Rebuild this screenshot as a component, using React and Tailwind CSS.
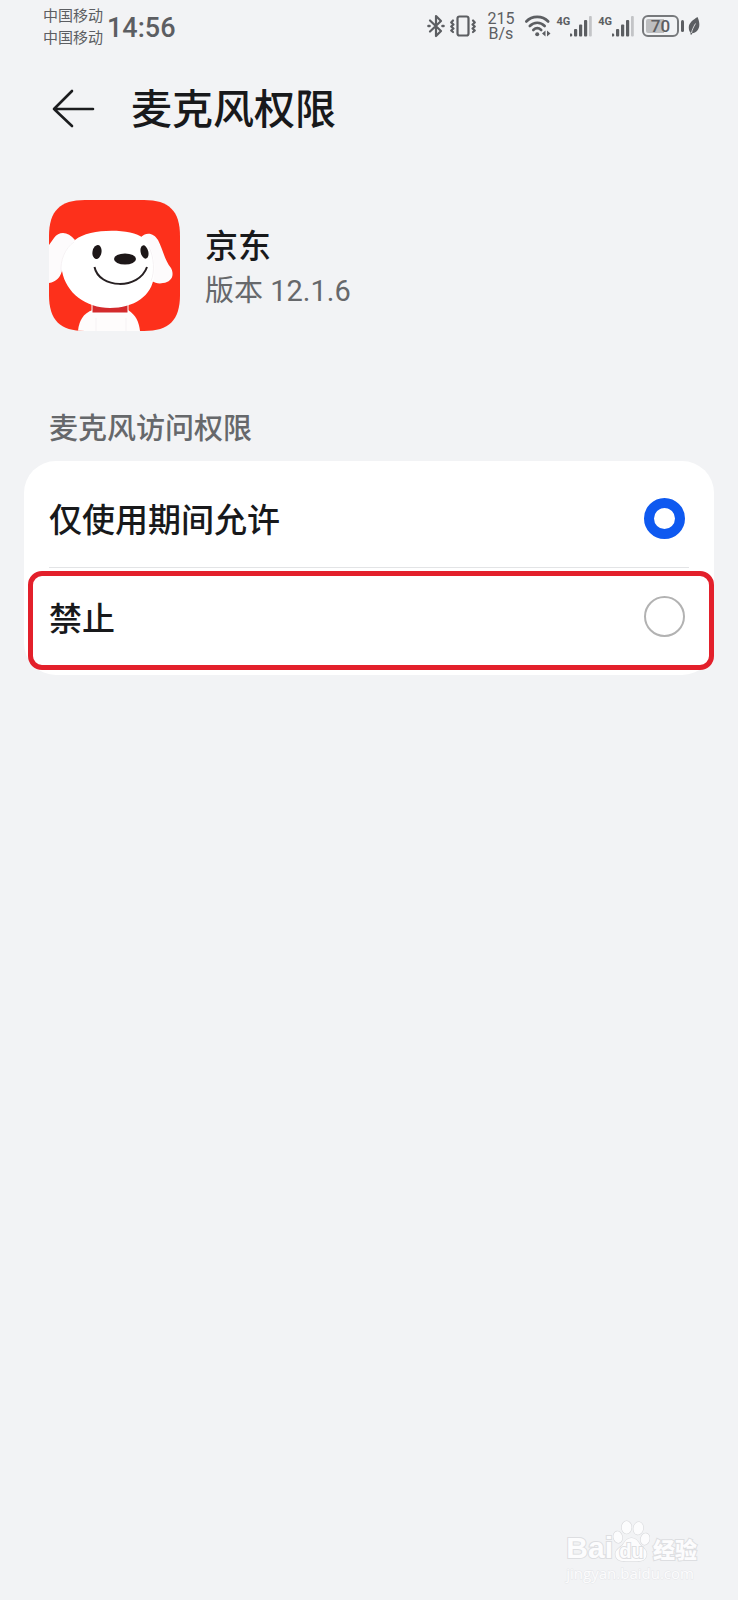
import { useState } from "react";

const options = [
  { value: "in-use", label: "仅使用期间允许" },
  { value: "deny", label: "禁止" },
];

function BluetoothIcon() {
  return (
    <svg className="h-6 w-[18px]" viewBox="0 0 18 24" fill="none" stroke="#5c5e62" strokeWidth="2.200" strokeLinejoin="round" strokeLinecap="round" aria-hidden="true">
      <path d="M3 6.500L14 17l-5 5V2l5 5L3 17.500" />
      <path d="M1.500 12h1M15.500 12h1" strokeWidth="2.600" />
    </svg>
  );
}

function VibrateIcon() {
  return (
    <svg className="h-6 w-7" viewBox="0 0 28 24" fill="none" stroke="#5c5e62" strokeWidth="2.200" strokeLinejoin="round" strokeLinecap="round" aria-hidden="true">
      <rect x="8.500" y="2.500" width="11" height="19" rx="2" />
      <path d="M4 6.500l-1.800 2L4.500 10.500l-2.300 2L4.500 14.500l-2.300 2L4 18" />
      <path d="M24 6.500l1.800 2L23.500 10.500l2.300 2L23.500 14.500l2.300 2L24 18" />
    </svg>
  );
}

function WifiIcon() {
  return (
    <svg className="h-6 w-7" viewBox="0 0 28 24" fill="none" stroke="#5c5e62" strokeWidth="2.600" strokeLinecap="round" aria-hidden="true">
      <path d="M2.300 7.500C8 1.300 18.500 1.300 24.200 7.500" />
      <path d="M5.800 12C10 7.600 16.500 7.600 20.700 12" />
      <path d="M9.300 16C11.700 13.700 14.800 13.700 17.200 16" />
      <circle cx="13.200" cy="20.300" r="2" fill="#5c5e62" stroke="none" />
      <path d="M21.500 16.500v6l-3.500-3zM23 16.500v6l3.500-3z" fill="#5c5e62" stroke="none" />
    </svg>
  );
}

function Signal() {
  return (
    <div className="flex h-6 items-start">
      <span className="text-[11px] leading-4 font-bold">4G</span>
      <svg className="h-6 w-[22px]" viewBox="1 0 22 24" fill="#5c5e62" aria-hidden="true">
        <rect x="0" y="19.500" width="3.200" height="3" rx="1.200" />
        <rect x="5" y="15" width="3.200" height="7.500" rx="1" />
        <rect x="10" y="10.500" width="3.200" height="12" rx="1" />
        <rect x="15" y="6" width="3.200" height="16.500" rx="1" />
        <rect x="20" y="2" width="2.800" height="20.500" rx="1" fill="#c3c4c7" />
      </svg>
    </div>
  );
}

function LeafIcon() {
  return (
    <svg className="h-6 w-3" viewBox="0 0 12 24" aria-hidden="true">
      <path d="M9.500 3C5 6 .5 9 .8 14c.1 2 .7 3.500 1.700 4.600L2.500 20.500l1 .3.700-1.500C9.500 19 14 13 9.500 3z" fill="#5c5e62" />
      <path d="M3.500 19C4 16 5.500 13 7.500 9.500" stroke="#f2f3f5" strokeWidth=".8" fill="none" />
    </svg>
  );
}

function StatusBar() {
  return (
    <div className="flex items-center justify-between pt-1 pr-[38px] pl-[43px] text-[#5c5e62]">
      <div className="flex items-center gap-1">
        <div className="text-[15px] leading-[22px]">
          <div>中国移动</div>
          <div>中国移动</div>
        </div>
        <time className="pt-1 font-[Roboto,sans-serif] text-[27px] leading-8 font-medium">14:56</time>
      </div>
      <div className="flex items-center gap-1 font-[Roboto,sans-serif]">
        <BluetoothIcon />
        <VibrateIcon />
        <div className="mx-[6px] text-center text-[16px] leading-[15px]">
          <div>215</div>
          <div>B/s</div>
        </div>
        <WifiIcon />
        <Signal />
        <div className="mr-1 ml-[2px]">
          <Signal />
        </div>
        <div className="flex items-center gap-[2px]">
          <div className="flex h-[22px] w-[37px] items-center justify-center rounded-[6px] border-2 border-[#77797c] bg-[linear-gradient(90deg,#bdbec0_60%,transparent_60%)] bg-clip-content p-[2px] text-[17px] leading-4 font-medium">
            70
          </div>
          <div className="h-3 w-[3px] rounded-sm bg-[#5c5e62]" />
        </div>
        <LeafIcon />
      </div>
    </div>
  );
}

function AppIcon() {
  return (
    <svg className="size-[131px] shrink-0" viewBox="0 0 131 131" role="img" aria-label="京东">
      <defs>
        <clipPath id="tile">
          <path d="M0 36C0 11 11 0 36 0H95C120 0 131 11 131 36V95C131 120 120 131 95 131H36C11 131 0 120 0 95Z" />
        </clipPath>
      </defs>
      <g clipPath="url(#tile)">
        <rect width="131" height="131" fill="#fd301b" />
        <path d="M26 40C19 31 10 31 5 38L0 45V83C7 82 12 77 13 70Z" fill="#fdfbfc" />
        <path d="M91 38C97 31 105 33 109 40C114 50 116 61 122 68C126 76 122 82 114 83C110 84 106 83 103 81Z" fill="#fdfbfc" />
        <path d="M29 131C30 121 34 113 44 110H79C87 115 90 122 91 131Z" fill="#fefcfc" />
        <path d="M43 104H79V113H43Z" fill="#d32a2c" stroke="#fff" strokeWidth="1" />
        <path d="M26 40C40 28 82 28 94 38C103 45 107 60 105 76C103 96 85 108 61 108C37 108 17 93 13 71C11 58 16 48 26 40Z" fill="#fff" />
        <path d="M12 72C11 61 16 48 25 42M102 81C106 72 105 57 100 47" stroke="#f6f2f4" fill="none" />
        <path d="M47 118V131M77 118V131" stroke="#f6f2f4" />
        <ellipse cx="48" cy="52" rx="4.500" ry="7" transform="rotate(10 48 52)" fill="#1d1718" />
        <ellipse cx="95.500" cy="52" rx="3.800" ry="6.800" transform="rotate(-14 95.500 52)" fill="#1d1718" />
        <ellipse cx="76" cy="59" rx="11" ry="5.500" fill="#1d1718" />
        <path d="M45.500 67C50 89 90 90 98 67" stroke="#272022" strokeWidth="2" fill="none" />
      </g>
    </svg>
  );
}

function Watermark() {
  return (
    <footer className="mt-auto self-end pr-[41px] pb-[17px] text-[#fcfcfd] [-webkit-text-stroke:2px_#dddee1] [paint-order:stroke_fill]">
      <div className="flex items-end">
        <span className="font-['Liberation_Sans',sans-serif] text-[30px] leading-[30px] font-bold">Bai</span>
        <div className="relative h-[43px] w-[37px]">
          <svg className="h-[43px] w-[37px]" viewBox="1 1 38 43" fill="#fcfcfd" stroke="#d8d9dc" strokeWidth="1.200" aria-hidden="true">
            <ellipse cx="6" cy="18" rx="4.500" ry="6" transform="rotate(-12 6 18)" />
            <ellipse cx="15" cy="8" rx="5" ry="6.500" />
            <ellipse cx="27" cy="9" rx="5" ry="6.500" transform="rotate(10 27 9)" />
            <ellipse cx="34" cy="20" rx="4.500" ry="6" transform="rotate(14 34 20)" />
            <path d="M20 19C25 19 27 23 29 26C32 29 36 31 35.500 36C35 41 31 43 26 42.500H14C8 43 4 41 3.500 36C3 31 8 29 11 26C13 23 15 19 20 19Z" />
          </svg>
          <span className="absolute inset-x-0 bottom-0 text-center font-['Liberation_Sans',sans-serif] text-[20px] leading-6 font-bold">du</span>
        </div>
        <span className="ml-[3px] text-[22px] leading-[30px] font-black">经验</span>
      </div>
      <div className="font-['Open_Sans',sans-serif] text-[15px] leading-5 [-webkit-text-stroke:1px_#e6e7ea]">jingyan.baidu.com</div>
    </footer>
  );
}

export default function App() {
  const [choice, setChoice] = useState("in-use");

  return (
    <div className="flex min-h-screen flex-col bg-[#f2f3f5] font-['Noto_Sans_CJK_SC',sans-serif] text-[#18191b]">
      <StatusBar />

      <header className="flex items-center gap-9 px-[52px] pt-[30px]">
        <button type="button" aria-label="返回" className="flex">
          <svg className="h-[60px] w-[43px]" viewBox="0 0 43 60" fill="none" stroke="#1b1c1e" strokeWidth="2.600" strokeLinecap="round" strokeLinejoin="round" aria-hidden="true">
            <path d="M20 13L2 31L20 48M2 31H41" />
          </svg>
        </button>
        <h1 className="pb-1 text-[41px] leading-[56px] font-medium">麦克风权限</h1>
      </header>

      <main>
        <section className="flex items-center gap-[25px] px-[49px] pt-[62px]">
          <AppIcon />
          <div className="pt-1">
            <h2 className="text-[33px] leading-[46px] font-medium">京东</h2>
            <p className="font-[Roboto,'Noto_Sans_CJK_SC',sans-serif] text-[29px] leading-[48px] text-[#66686b]">版本 12.1.6</p>
          </div>
        </section>

        <section role="radiogroup" aria-labelledby="access-title" className="px-6 pt-[72px]">
          <h3 id="access-title" className="px-[25px] text-[29px] leading-[46px] font-medium text-[#66686b]">
            麦克风访问权限
          </h3>
          <div className="relative mt-3 rounded-[32px] bg-white px-[25px] pt-2 pb-[10px]">
            {options.map((option, i) => (
              <label
                key={option.value}
                className={
                  i > 0
                    ? "flex h-[98px] items-center justify-between border-t border-[#e3e4e6] pr-1"
                    : "flex h-[98px] items-center justify-between pr-1"
                }
              >
                <span className="text-[33px] leading-[48px] font-medium">{option.label}</span>
                <input
                  type="radio"
                  name="microphone"
                  value={option.value}
                  checked={choice === option.value}
                  onChange={() => setChoice(option.value)}
                  className="size-[41px] appearance-none rounded-full border-2 border-[#b2b2b2] bg-white checked:border-[10px] checked:border-[#0e59f0]"
                />
              </label>
            ))}
            <div className="pointer-events-none absolute right-0 bottom-[5px] left-1 h-[99px] rounded-[14px] border-[5px] border-[#e3202b]" />
          </div>
        </section>
      </main>

      <Watermark />
    </div>
  );
}
